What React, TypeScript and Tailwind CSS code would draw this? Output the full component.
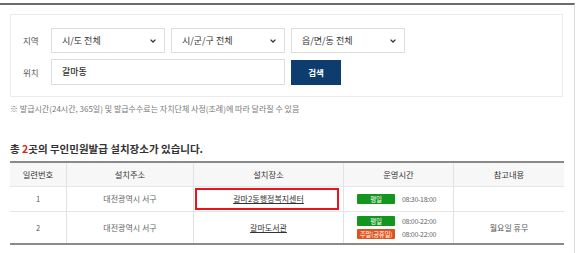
import React from "react";

const font = { fontFamily: '"Noto Sans CJK KR", "Noto Sans", sans-serif' };

function Chevron() {
  return (
    <svg width="6" height="4" viewBox="0 0 6 4" className="shrink-0">
      <path d="M0.6 0.6 L3 3 L5.4 0.6" fill="none" stroke="#333" strokeWidth="1.3" />
    </svg>
  );
}

function Select({ label }: { label: string }) {
  return (
    <div className="flex h-[25px] w-[114px] items-center justify-between border border-[#dedede] bg-white pl-[10px] pr-[8px] text-[9px] text-[#333]">
      <span>{label}</span>
      <Chevron />
    </div>
  );
}

function Badge({ text, color, w }: { text: string; color: string; w: string }) {
  return (
    <span
      className={`flex h-[10px] items-center justify-center rounded-[1px] text-[6.5px] leading-none text-white ${color} ${w}`}
    >
      {text}
    </span>
  );
}

export default function App() {
  return (
    <div style={font} className="h-[253px] w-[576px] overflow-hidden bg-white pt-[3px]">
      <div className="h-[250px] w-[575px] border-t-2 border-r border-t-[#6b6b6b] border-r-[#dcdcdc]">
        {/* Search box */}
        <div className="ml-[10px] mt-[9px] flex h-[83px] w-[553px] flex-col gap-[6px] border border-[#ebebeb] pl-[12px] pt-[13px]">
          <div className="flex items-center">
            <span className="w-[28px] text-[8.5px] text-[#555]">지역</span>
            <div className="flex gap-[6px]">
              <Select label="시/도 전체" />
              <Select label="시/군/구 전체" />
              <Select label="읍/면/동 전체" />
            </div>
          </div>
          <div className="flex items-center">
            <span className="w-[28px] text-[8.5px] text-[#555]">위치</span>
            <div className="flex h-[26px] w-[234px] items-center border border-[#dedede] pl-[10px] text-[9px] font-medium text-[#333]">
              갈마동
            </div>
            <button className="ml-[6px] flex h-[25px] w-[50px] items-center justify-center bg-[#0c3d6e] text-[8.5px] font-bold text-white">
              검색
            </button>
          </div>
        </div>

        {/* Note */}
        <p className="ml-[10px] mt-[7px] text-[8px] leading-[10px] text-[#777]">
          ※ 발급시간(24시간, 365일) 및 발급수수료는 자치단체 사정(조례)에 따라 달라질 수 있음
        </p>

        {/* Heading */}
        <h2 className="ml-[10px] mt-[28px] text-[10.5px] font-bold leading-[14px] text-[#333]">
          총 <span className="text-[#e02020]">2</span>곳의 무인민원발급 설치장소가 있습니다.
        </h2>

        {/* Table */}
        <div className="ml-[10px] mt-[5px] w-[554px] border-t-2 border-b-2 border-[#8a8a8a] text-[8px] text-[#555]">
          <div className="grid h-[23px] grid-cols-[56px_127px_150px_110px_111px] bg-[#f7f7f7] text-[8.3px] text-[#333]">
            <div className="flex items-center justify-center">일련번호</div>
            <div className="flex items-center justify-center border-l border-[#e2e2e2]">설치주소</div>
            <div className="flex items-center justify-center border-l border-[#e2e2e2]">설치장소</div>
            <div className="flex items-center justify-center border-l border-[#e2e2e2]">운영시간</div>
            <div className="flex items-center justify-center border-l border-[#e2e2e2]">참고내용</div>
          </div>
          <div className="grid h-[25px] grid-cols-[56px_127px_150px_110px_111px] border-t border-[#e6e6e6]">
            <div className="flex items-center justify-center text-[7.5px]">1</div>
            <div className="flex items-center justify-center border-l border-[#e2e2e2] text-[#666]">대전광역시 서구</div>
            <div className="relative flex items-center justify-center border-l border-[#e2e2e2] text-[#333]">
              <span className="underline underline-offset-1">갈마2동행정복지센터</span>
              <div className="absolute bottom-[1px] left-[1px] right-[4px] top-[1px] border-2 border-[#e8141b]" />
            </div>
            <div className="flex items-center gap-[7px] border-l border-[#e2e2e2] pl-[13px] text-[7px] tracking-[-0.3px] text-[#666]">
              <Badge text="평일" color="bg-[#14961e]" w="w-[38px]" />
              <span>08:30-18:00</span>
            </div>
            <div className="border-l border-[#e2e2e2]" />
          </div>
          <div className="grid h-[32px] grid-cols-[56px_127px_150px_110px_111px] border-t border-[#e6e6e6]">
            <div className="flex items-center justify-center text-[7.5px]">2</div>
            <div className="flex items-center justify-center border-l border-[#e2e2e2] text-[#666]">대전광역시 서구</div>
            <div className="flex items-center justify-center border-l border-[#e2e2e2] text-[#333]">
              <span className="underline underline-offset-1">갈마도서관</span>
            </div>
            <div className="flex flex-col justify-center gap-[2px] border-l border-[#e2e2e2] pl-[13px] text-[7px] tracking-[-0.3px] text-[#666]">
              <div className="flex items-center gap-[7px]">
                <Badge text="평일" color="bg-[#14961e]" w="w-[38px]" />
                <span>08:00-22:00</span>
              </div>
              <div className="flex items-center gap-[7px]">
                <Badge text="주말(공휴일)" color="bg-[#e0531c]" w="w-[38px]" />
                <span>08:00-22:00</span>
              </div>
            </div>
            <div className="flex items-center justify-center border-l border-[#e2e2e2] text-[#555]">월요일 휴무</div>
          </div>
        </div>
      </div>
    </div>
  );
}
